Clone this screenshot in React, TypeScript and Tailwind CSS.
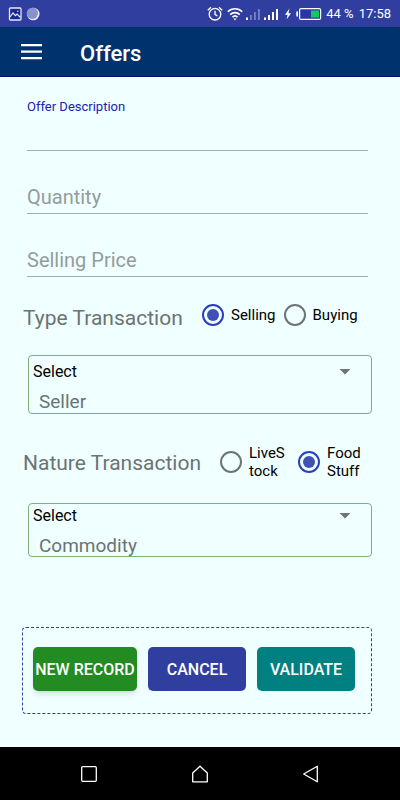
import { useState } from "react";

function StatusBar() {
  return (
    <div className="flex h-[27px] shrink-0 items-center justify-between bg-[#303f9f] pl-2 pr-[9px] text-white">
      <div className="flex items-center gap-1">
        <svg className="h-3.5 w-3.5" viewBox="0 0 14 14" fill="none" stroke="#e8eaf6">
          <rect x="1.5" y="1" width="11.5" height="12" rx="1" fill="#1a2596" strokeWidth="1.3" />
          <path d="M2 10l3-4 2.4 2.6L9 7l3.5 3.5" strokeWidth="1.2" />
          <circle cx="9.8" cy="4.3" r=".7" fill="#e8eaf6" stroke="none" />
        </svg>
        <svg className="h-3.5 w-3.5" viewBox="0 0 14 14">
          <circle cx="7.2" cy="7" r="6.3" fill="#e6e8f5" />
          <circle cx="6.4" cy="6.3" r="5.6" fill="#8a91cb" />
        </svg>
      </div>
      <div className="flex items-center">
        <svg className="h-4 w-4" viewBox="0 0 16 16" fill="none" stroke="#fff" strokeWidth="1.3">
          <circle cx="8" cy="8.2" r="5.8" />
          <path d="M8 4.8v3.6l2.3 1.6M.8 4.2l3.2-3M15.2 4.2l-3.2-3" />
        </svg>
        <svg className="ml-1 h-4 w-4" viewBox="0 0 16 16" fill="none" stroke="#fff" strokeWidth="1.6">
          <path d="M.8 5.800c4-4 10.400-4 14.400 0M3.200 8.600c2.700-2.700 6.900-2.700 9.600 0M5.500 11.100c1.400-1.400 3.600-1.400 5 0" />
          <path d="M6.400 12.500h3.200L8 14.600z" fill="#fff" stroke="none" />
        </svg>
        <svg className="ml-[3px] h-3.5 w-4" viewBox="0 0 16 14" fill="#fff">
          <rect x="0" y="10.500" width="2" height="2.500" />
          <g opacity=".35">
            <rect x="4" y="8" width="1.800" height="5" />
            <rect x="8" y="5" width="1.800" height="8" />
            <rect x="12" y="2" width="1.800" height="11" />
          </g>
        </svg>
        <svg className="ml-0.5 h-3.5 w-4" viewBox="0 0 16 14" fill="#fff">
          <rect x="0" y="10.500" width="2" height="2.500" />
          <rect x="4" y="8" width="2" height="5" />
          <rect x="8" y="5" width="2" height="8" />
          <rect x="12" y="2" width="2" height="11" />
        </svg>
        <svg className="ml-1 h-3 w-2" viewBox="0 0 8 12" fill="#fff">
          <path d="M5.500.5L1 6.800h2.600L2.600 11.500 7 5.200H4.400z" />
        </svg>
        <svg className="ml-1 h-3.5 w-[26px]" viewBox="0 0 26 14">
          <rect x=".3" y="4.500" width="1.700" height="5" fill="#fff" />
          <rect x="3.600" y="1.600" width="21" height="10.800" rx="1.500" fill="#2a35a5" stroke="#fff" strokeWidth="1.200" />
          <rect x="15" y="3.500" width="8" height="7" fill="#16c75c" />
        </svg>
        <span className="ml-1 text-[13px] leading-4">44 %</span>
        <span className="ml-[5px] text-[13px] leading-4">17:58</span>
      </div>
    </div>
  );
}

function Field({ label }: { label: string }) {
  return (
    <input
      type="text"
      aria-label={label}
      placeholder={label}
      className="mt-[29px] h-[34px] w-full rounded-none border-b border-[#a4adad] bg-transparent text-[20px] text-black outline-none placeholder:text-[#949c9c]"
    />
  );
}

type RadioProps = {
  name: string;
  label: string;
  checked: boolean;
  onChange: () => void;
  textClass?: string;
};

function Radio({ name, label, checked, onChange, textClass = "" }: RadioProps) {
  return (
    <label className="flex items-center gap-[7px] text-[15px] leading-[18px] text-black">
      <input
        type="radio"
        name={name}
        checked={checked}
        onChange={onChange}
        className="grid h-[22px] w-[22px] shrink-0 appearance-none place-content-center rounded-full border-2 border-[#6e7474] before:h-3 before:w-3 before:rounded-full before:content-[''] checked:border-[#2b3fbd] checked:before:bg-[#3f51b5]"
      />
      <span className={textClass}>{label}</span>
    </label>
  );
}

function Picker({ id, label, className }: { id: string; label: string; className: string }) {
  return (
    <div className={`relative ml-1.5 rounded border border-[#7ab27a] pl-1 ${className}`}>
      <select id={id} className="block h-6 w-full appearance-none bg-transparent text-[16px] leading-6 text-black outline-none">
        <option>Select</option>
      </select>
      <svg className="pointer-events-none absolute right-5 -mt-[15px] h-1.5 w-3" viewBox="0 0 12 6" fill="#6e7474">
        <path d="M.5 0h11L6 5.500z" />
      </svg>
      <label htmlFor={id} className="mt-1.5 block pl-1.5 text-[19px] leading-6 text-[#6b7373]">
        {label}
      </label>
    </div>
  );
}

export default function App() {
  const [type, setType] = useState("selling");
  const [nature, setNature] = useState("food");

  return (
    <div className="flex min-h-screen flex-col bg-[#f0ffff] font-['Roboto',sans-serif]">
      <StatusBar />

      <header className="flex h-[50px] shrink-0 items-center gap-[38px] border-b border-[#00106b] bg-[#00336e] pl-[21px] text-white">
        <button type="button" aria-label="Open menu">
          <svg className="h-4 w-[21px]" viewBox="0 0 21 16" fill="#fff">
            <path d="M0 0h21v2.300H0zM0 6.500h21v2.300H0zM0 13h21v2.300H0z" />
          </svg>
        </button>
        <h1 className="pt-1 text-[22px] font-medium leading-6">Offers</h1>
      </header>

      <form className="flex grow flex-col pb-[33px] pl-[22px] pr-7 pt-[21px]" onSubmit={(e) => e.preventDefault()}>
        <div className="pl-[5px] pr-1">
          <label htmlFor="description" className="block pt-px text-[13px] leading-4 text-[#2222b4]">
            Offer Description
          </label>
          <input
            id="description"
            type="text"
            className="block h-9 w-full rounded-none border-b border-[#a4adad] bg-transparent text-[20px] text-black outline-none"
          />
          <Field label="Quantity" />
          <Field label="Selling Price" />
        </div>

        <div role="radiogroup" aria-labelledby="type-title" className="mt-[26px] flex h-6 items-center">
          <h2 id="type-title" className="w-[180px] shrink-0 pl-px pt-1.5 text-[21px] leading-6 text-[#6b7373]">
            Type Transaction
          </h2>
          <div className="flex gap-2">
            <Radio name="type" label="Selling" checked={type === "selling"} onChange={() => setType("selling")} />
            <Radio name="type" label="Buying" checked={type === "buying"} onChange={() => setType("buying")} />
          </div>
        </div>
        <Picker id="seller" label="Seller" className="mt-7 h-[59px] pt-1" />

        <div role="radiogroup" aria-labelledby="nature-title" className="mt-[30px] flex items-center">
          <h2 id="nature-title" className="w-[198px] shrink-0 pl-px pt-0.5 text-[21px] leading-6 text-[#6b7373]">
            Nature Transaction
          </h2>
          <div className="flex gap-[11px]">
            <Radio
              name="nature"
              label="LiveStock"
              checked={nature === "livestock"}
              onChange={() => setNature("livestock")}
              textClass="w-[38px] break-all"
            />
            <Radio
              name="nature"
              label="Food Stuff"
              checked={nature === "food"}
              onChange={() => setNature("food")}
              textClass="w-[38px]"
            />
          </div>
        </div>
        <Picker id="commodity" label="Commodity" className="mt-[23px] h-[54px]" />

        <div className="mt-auto flex gap-[11px] rounded-sm border border-dashed border-[#303f9f] pb-[22px] pl-2.5 pr-4 pt-[19px] text-[16px] font-medium text-white">
          <button type="button" className="h-11 grow whitespace-nowrap rounded-[5px] bg-[#228b22] pt-0.5 shadow-md">
            NEW RECORD
          </button>
          <button type="button" className="h-11 w-[98px] rounded-[5px] bg-[#303f9f] pt-0.5">
            CANCEL
          </button>
          <button type="submit" className="h-11 w-[98px] rounded-[5px] bg-[#008080] pt-0.5">
            VALIDATE
          </button>
        </div>
      </form>

      <nav className="flex h-[53px] shrink-0 items-center justify-center gap-[93px] bg-black text-white">
        <button type="button" aria-label="Recent apps">
          <svg className="h-[18px] w-[18px]" viewBox="0 0 18 18" fill="none" stroke="#fff" strokeWidth="1.300">
            <rect x="1.700" y="1.700" width="14.600" height="14.600" rx="1" />
          </svg>
        </button>
        <button type="button" aria-label="Home">
          <svg className="h-[18px] w-[18px]" viewBox="0 0 18 18" fill="none" stroke="#fff" strokeWidth="1.300" strokeLinejoin="round">
            <path d="M1.700 16.800V8L9 1.200 16.300 8v8.800z" />
          </svg>
        </button>
        <button type="button" aria-label="Back">
          <svg className="h-[18px] w-[18px]" viewBox="0 0 18 18" fill="none" stroke="#fff" strokeWidth="1.300" strokeLinejoin="round">
            <path d="M15.300 1.200v15.600L1.700 9z" />
          </svg>
        </button>
      </nav>
    </div>
  );
}
